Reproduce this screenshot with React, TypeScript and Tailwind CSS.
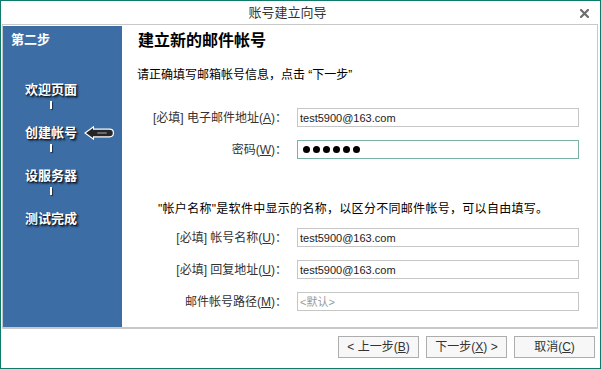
import React from "react";

const FONT = '"Liberation Sans", "Noto Sans CJK SC", sans-serif';

function Step({ text, arrow = false, line = true }: { text: string; arrow?: boolean; line?: boolean }) {
  return (
    <div className="flex flex-col">
      <div className="flex items-center h-[16px]">
        <span
          className="text-[13px] leading-[16px] font-bold text-white"
          style={{ textShadow: "1px 1px 1px #0d1a2c, 2px 2px 2px #1c2f4a" }}
        >
          {text}
        </span>
        {arrow && (
          <svg width="32" height="16" viewBox="0 0 32 16" className="ml-[6px]">
            <path
              d="M1 8 L11 0.8 L11 3.6 L26.5 3.6 Q31 3.6 31 8 Q31 12.4 26.5 12.4 L11 12.4 L11 15.2 Z"
              fill="#ffffff"
            />
            <path
              d="M3 8 L10 3 L10 4.8 L26.5 4.8 Q29.8 4.8 29.8 8 Q29.8 11.2 26.5 11.2 L10 11.2 L10 13 Z"
              fill="#262626"
            />
            <rect x="14" y="7" width="10" height="2" rx="1" fill="#6a6a6a" />
          </svg>
        )}
      </div>
      {line && (
        <div
          className="ml-[25px] mt-[3px] mb-[16px] w-[2px] h-[8px] bg-white"
          style={{ boxShadow: "1px 1px 1px #1c2f4a" }}
        />
      )}
    </div>
  );
}

function Row({ label, children, mt }: { label: React.ReactNode; children: React.ReactNode; mt: string }) {
  return (
    <div className={`flex items-center h-[19px] ${mt}`}>
      <div className="w-[165px] text-right text-[12px] leading-[16px] text-[#333]">{label}</div>
      <div className="ml-[10px] w-[282px] h-[19px]">{children}</div>
    </div>
  );
}

function TextBox({ value, placeholder = false }: { value: string; placeholder?: boolean }) {
  return (
    <div className="w-full h-full border border-[#c6c6c6] bg-white flex items-center pl-[2px]">
      <span className={`text-[11px] leading-[14px] ${placeholder ? "text-[#9a9a9a]" : "text-[#222]"}`}>{value}</span>
    </div>
  );
}

function Btn({ children }: { children: React.ReactNode }) {
  return (
    <div className="w-[81px] h-[22px] border border-[#adadad] bg-[#f7f7f7] flex items-center justify-center text-[12px] text-[#333]">
      {children}
    </div>
  );
}

export default function App() {
  return (
    <div
      className="w-[601px] h-[369px] bg-white border border-[#0f7b6b] flex flex-col overflow-hidden"
      style={{ fontFamily: FONT }}
    >
      {/* title bar */}
      <div className="h-[23px] shrink-0 relative flex items-center justify-center pr-[26px]">
        <span className="text-[13px] text-[#333] leading-[16px]">账号建立向导</span>
        <svg width="9" height="9" viewBox="0 0 9 9" className="absolute right-[11px] top-[8px]">
          <path d="M1 1 L8 8 M8 1 L1 8" stroke="#6e6e6e" strokeWidth="2.2" strokeLinecap="square" />
        </svg>
      </div>

      {/* main panel */}
      <div className="ml-[1px] mr-[2px] h-[305px] shrink-0 border-t border-l border-r border-b-2 border-[#c8c8c8] pt-[1px] flex">
        <div className="w-[119px] h-full bg-[#3c6ea5] flex flex-col">
          <div className="pl-[8px] pt-[6px] h-[22px] text-[13px] leading-[16px] font-bold text-white">第二步</div>
          <div className="pl-[22px] mt-[34px] flex flex-col">
            <Step text="欢迎页面" />
            <Step text="创建帐号" arrow />
            <Step text="设服务器" />
            <Step text="测试完成" line={false} />
          </div>
        </div>

        <div className="flex-1 flex flex-col">
          <div className="pl-[16px] pt-[6px] text-[16px] leading-[18px] font-bold text-black">建立新的邮件帐号</div>
          <div className="pl-[15px] mt-[17px] text-[12px] leading-[16px] text-black">
            请正确填写邮箱帐号信息，点击 “下一步”
          </div>

          <Row
            mt="mt-[25px]"
            label={
              <>
                [必填] 电子邮件地址(<u>A</u>)：
              </>
            }
          >
            <TextBox value="test5900@163.com" />
          </Row>
          <Row
            mt="mt-[13px]"
            label={
              <>
                密码(<u>W</u>)：
              </>
            }
          >
            <div className="w-full h-full border border-[#7ab3a5] bg-white flex items-center pl-[5px] gap-[3px]">
              {[0, 1, 2, 3, 4, 5].map((i) => (
                <div key={i} className="w-[7px] h-[7px] rounded-full bg-black" />
              ))}
            </div>
          </Row>

          <div className="pl-[36px] mt-[42px] text-[12px] leading-[16px] text-black tracking-[0.3px]">
            "帐户名称"是软件中显示的名称，以区分不同邮件帐号，可以自由填写。
          </div>

          <Row
            mt="mt-[11px]"
            label={
              <>
                [必填] 帐号名称(<u>U</u>)：
              </>
            }
          >
            <TextBox value="test5900@163.com" />
          </Row>
          <Row
            mt="mt-[13px]"
            label={
              <>
                [必填] 回复地址(<u>U</u>)：
              </>
            }
          >
            <TextBox value="test5900@163.com" />
          </Row>
          <Row
            mt="mt-[13px]"
            label={
              <>
                邮件帐号路径(<u>M</u>)：
              </>
            }
          >
            <TextBox value="<默认>" placeholder />
          </Row>
        </div>
      </div>

      {/* buttons */}
      <div className="flex justify-end gap-[7px] mt-[7px] pr-[5px]">
        <Btn>
          &lt; 上一步(<u>B</u>)
        </Btn>
        <Btn>
          下一步(<u>X</u>) &gt;
        </Btn>
        <Btn>
          取消(<u>C</u>)
        </Btn>
      </div>
    </div>
  );
}
